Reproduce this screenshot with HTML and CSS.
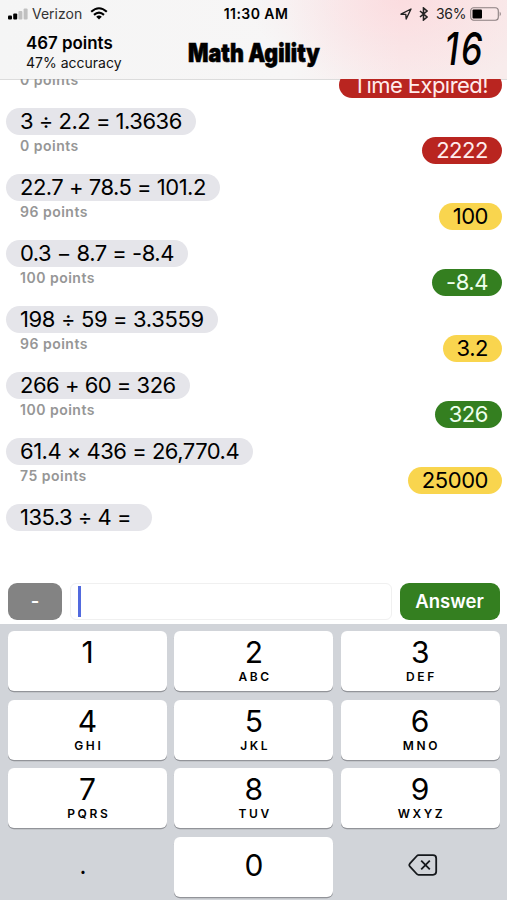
FILE: index.html
```html
<!DOCTYPE html>
<html lang="en">
<head>
<meta charset="utf-8">
<title>Math Agility</title>
<link rel="stylesheet" href="styles.css">
</head>
<body>
<div class="screen">
  <header class="header">
    <div class="status">
      <div class="status-left">
        <svg class="signal" width="20" height="12" viewBox="0 0 20 12"><rect x="0" y="7.5" width="4" height="4" rx="1"/><rect x="5.2" y="5.5" width="4" height="6" rx="1"/><g fill="#c0c0c0"><rect x="10.4" y="3" width="4" height="8.5" rx="1"/><rect x="15.6" y="0.5" width="4" height="11" rx="1"/></g></svg>
        <span class="carrier">Verizon</span>
        <svg width="18" height="13" viewBox="0 0 18 13"><g fill="none" stroke="#000" stroke-width="2.1"><path d="M1.2 4.8Q9-2.3 16.8 4.8"/><path d="M4 7.9Q9 3.4 14 7.9"/></g><path d="M6.2 9.7Q9 7.3 11.8 9.7L9 12.5Z"/></svg>
      </div>
      <span class="clock">11:30 AM</span>
      <div class="status-right">
        <svg width="12" height="12" viewBox="0 0 12 12"><path d="M1 6.2 11 1 6.2 11 5.8 6.4Z" fill="none" stroke="#222" stroke-width="1.4" stroke-linejoin="round"/></svg>
        <svg class="bluetooth" width="9" height="14" viewBox="0 0 9 14"><path d="M1 4 8 10 4.5 13V1L8 4 1 10" fill="none" stroke="#222" stroke-width="1.6"/></svg>
        <span class="percent">36%</span>
        <svg width="32" height="14" viewBox="0 0 32 14"><rect x=".7" y=".7" width="27.6" height="12.6" rx="3" fill="none" stroke="#8b7f80" stroke-width="1.1"/><rect x="2.5" y="2.5" width="9.5" height="9" rx="1"/><path d="M29.7 4.6Q32 7 29.7 9.4Z" fill="#8b7f80"/></svg>
      </div>
    </div>
    <div class="score">
      <div class="score-points">467 points</div>
      <div class="score-accuracy">47% accuracy</div>
    </div>
    <h1 class="title">Math Agility</h1>
    <div class="timer">16</div>
  </header>

  <main class="chat">
    <div class="round"><div class="question"><span class="bubble"></span><span class="points">0 points</span></div><span class="reply wrong expired">Time Expired!</span></div>
    <div class="round"><div class="question"><span class="bubble">3 ÷ 2.2 = 1.3636</span><span class="points">0 points</span></div><span class="reply wrong">2222</span></div>
    <div class="round"><div class="question"><span class="bubble">22.7 + 78.5 = 101.2</span><span class="points">96 points</span></div><span class="reply close">100</span></div>
    <div class="round"><div class="question"><span class="bubble">0.3 − 8.7 = -8.4</span><span class="points">100 points</span></div><span class="reply right">-8.4</span></div>
    <div class="round"><div class="question"><span class="bubble wide">198 ÷ 59 = 3.3559</span><span class="points">96 points</span></div><span class="reply close">3.2</span></div>
    <div class="round"><div class="question"><span class="bubble">266 + 60 = 326</span><span class="points">100 points</span></div><span class="reply right">326</span></div>
    <div class="round"><div class="question"><span class="bubble">61.4 × 436 = 26,770.4</span><span class="points">75 points</span></div><span class="reply close">25000</span></div>
    <div class="round"><div class="question"><span class="bubble pending">135.3 ÷ 4 =</span></div></div>
  </main>

  <div class="entry">
    <button class="sign">-</button>
    <div class="field"><span class="caret"></span></div>
    <button class="answer">Answer</button>
  </div>

  <div class="keypad">
    <div class="key"><b>1</b></div>
    <div class="key"><b>2</b><small>ABC</small></div>
    <div class="key"><b>3</b><small>DEF</small></div>
    <div class="key"><b>4</b><small>GHI</small></div>
    <div class="key"><b>5</b><small>JKL</small></div>
    <div class="key"><b>6</b><small>MNO</small></div>
    <div class="key"><b>7</b><small>PQRS</small></div>
    <div class="key"><b>8</b><small>TUV</small></div>
    <div class="key"><b>9</b><small>WXYZ</small></div>
    <div class="key plain dot"><b>.</b></div>
    <div class="key zero"><b>0</b></div>
    <div class="key plain delete"><svg width="30" height="22" viewBox="0 0 30 22" fill="none" stroke="#15181c" stroke-width="1.8" stroke-linejoin="round"><path d="M10.5 1.2H25Q28.2 1.2 28.2 4.4V17.6Q28.2 20.8 25 20.8H10.5Q9.5 20.8 8.8 20L1.8 12.3Q.8 11 1.8 9.7L8.8 2Q9.5 1.2 10.5 1.2Z"/><path d="M13.2 6.7 21.8 15.3M21.8 6.7 13.2 15.3"/></svg></div>
  </div>
</div>
</body>
</html>
```

FILE: styles.css
```css
* { box-sizing: border-box; }
body {
  margin: 0;
  background: #fff;
  color: #000;
  font-family: Inter, "Liberation Sans", sans-serif;
}
.screen {
  width: 507px;
  height: 900px;
  display: flex;
  flex-direction: column;
  overflow: hidden;
}

.header {
  height: 79px;
  flex: none;
  display: grid;
  grid-template-columns: 1fr 140px 1fr;
  grid-template-rows: 27px 52px;
  background:
    radial-gradient(ellipse 150px 90px at 400px 0, rgba(255, 200, 206, .42), rgba(255, 210, 214, 0)),
    linear-gradient(90deg, #f5f5f5 0, #f7f6f6 290px, #f9ebec 400px, #f8ecec 507px);
  box-shadow: 0 1px 0 #dcdcdc;
}
.status {
  grid-column: 1 / -1;
  display: grid;
  grid-template-columns: 1fr auto 1fr;
  align-items: center;
  padding: 0 7px 0 8px;
  font-size: 14px;
}
.status-left, .status-right { display: flex; align-items: center; }
.status-right { justify-content: flex-end; }
.carrier { margin: 0 8px 0 4px; color: #333; }
.clock { margin-left: 4px; font-weight: 600; font-size: 14px; letter-spacing: .45px; }
.bluetooth { margin: 0 8px 0 7px; }
.percent { margin-right: 4px; color: #222; letter-spacing: -.4px; }
.status-right svg:last-child { margin-right: -2px; }
.score { padding: 7px 0 0 26px; white-space: nowrap; }
.score-points { font-size: 16.9px; line-height: 19px; font-weight: 600; }
.score-accuracy { font-size: 14px; line-height: 19px; color: #111; }
.title {
  margin: 0;
  display: flex;
  justify-content: center;
  font: 900 25.5px/51px Inter, sans-serif;
  white-space: nowrap;
  transform: scaleX(.84);
  -webkit-text-stroke: .6px #000;
}
.timer {
  margin-left: -50px;
  padding-right: 28px;
  text-align: right;
  font: italic 500 45px/44px Inter, sans-serif;
  letter-spacing: 3px;
  transform: scaleX(.76);
  transform-origin: 228px 50%;
}

.chat {
  height: 498px;
  flex: none;
  overflow: hidden;
  display: flow-root;
}
.round {
  height: 65.95px;
  display: flex;
  justify-content: space-between;
  align-items: flex-start;
  padding: 0 5px 0 6px;
}
.round:first-child { margin-top: -36.5px; }
.question { display: flex; flex-direction: column; align-items: flex-start; }
.bubble, .reply {
  height: 26.5px;
  padding: 0 14px;
  border-radius: 14px;
  font-size: 22px;
  line-height: 27px;
  letter-spacing: -.5px;
  white-space: nowrap;
}
.bubble { background: #e5e5ea; }
.wide { letter-spacing: -.36px; }
.pending { padding-right: 21px; }
.points {
  margin: 2px 0 0 14px;
  font-size: 14px;
  line-height: 17px;
  font-weight: 600;
  letter-spacing: .5px;
  color: #969696;
}
.reply { margin-top: 29px; letter-spacing: -.45px; }
.reply.expired { letter-spacing: -.55px; }
.wrong { background: #b92520; color: #ffecec; }
.close { background: #f9d54e; }
.right { background: #347f20; color: #efffee; }

.entry {
  height: 47px;
  flex: none;
  display: grid;
  grid-template-columns: 54px 1fr 100px;
  gap: 7.5px;
  padding: 5.5px 7.5px 4px 8px;
}
.entry button {
  border: 0;
  padding: 0;
  border-radius: 9px;
  font: 600 18.5px Inter, sans-serif;
  color: #fff;
}
.entry .sign { background: #838383; }
.entry .answer { background: #347f20; }
.field {
  border: 1px solid #f0f0f0;
  border-radius: 6px;
  padding: 2px 7.5px;
}
.caret { display: block; width: 2.5px; height: 31px; background: #526ade; }

.keypad {
  flex: 1;
  display: grid;
  grid-template-columns: repeat(3, 1fr);
  grid-template-rows: repeat(4, 60px);
  gap: 8.5px 7.3px;
  padding: 7px 7.3px 0 8px;
  background: #d1d4d9;
}
.key {
  display: flex;
  flex-direction: column;
  align-items: center;
  padding-top: 5px;
  background: #fff;
  border-radius: 6px;
  box-shadow: 0 1.3px 0 #929499;
}
.key b { font-weight: 400; font-size: 30px; line-height: 33px; }
.key small {
  font-weight: 600;
  font-size: 12px;
  line-height: 15px;
  letter-spacing: 2.6px;
  margin-right: -2.6px;
}
.plain { background: none; box-shadow: none; }
.zero, .dot, .delete { justify-content: center; padding: 0 0 3px; }
.dot { padding-right: 9px; }
.dot b { font-size: 24px; }
.delete { padding-left: 6px; }
```
